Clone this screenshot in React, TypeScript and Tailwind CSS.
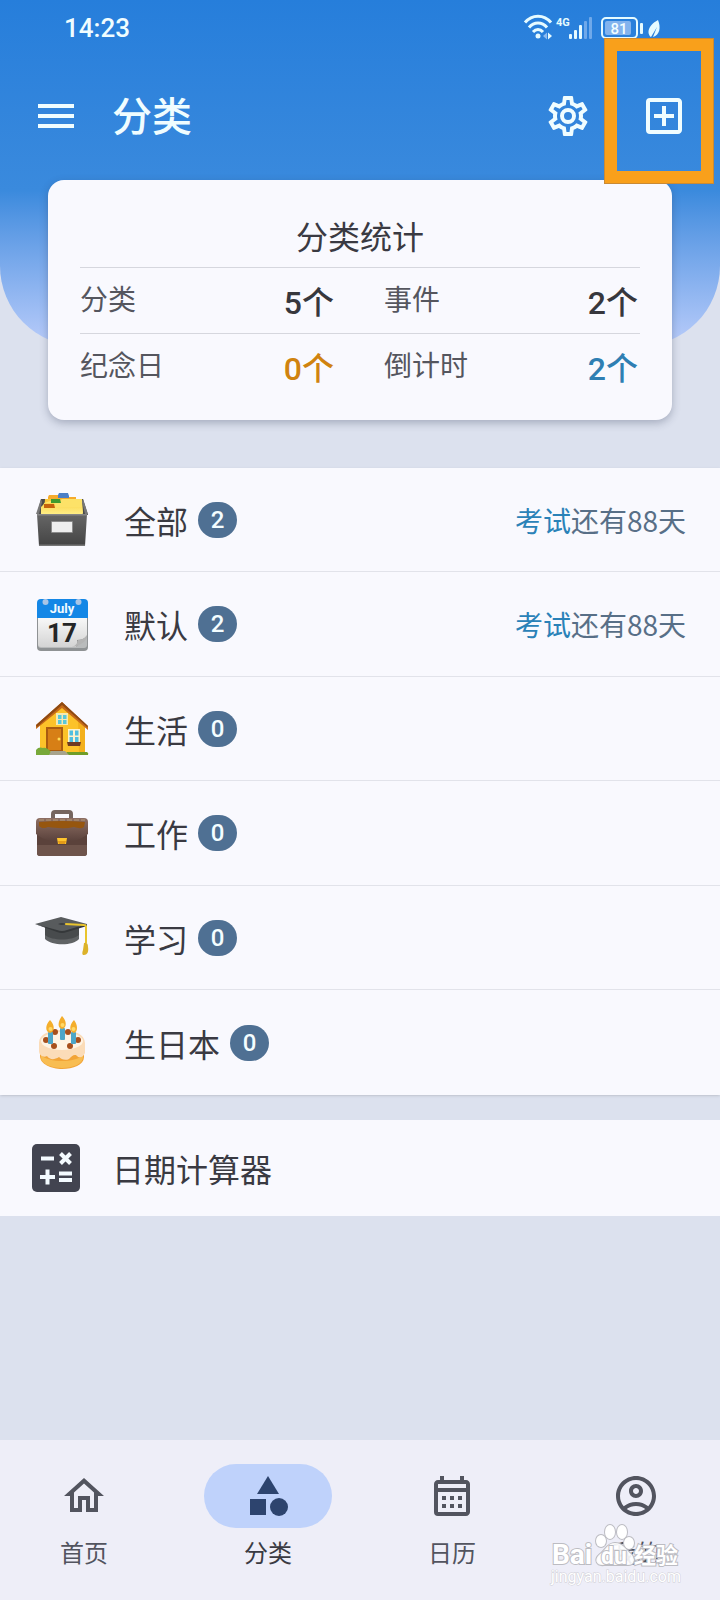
import type { ReactNode } from "react";
import {
  MdMenu,
  MdOutlineAccountCircle,
  MdOutlineAddBox,
  MdOutlineCalendarMonth,
  MdOutlineHome,
  MdCategory,
} from "react-icons/md";

function StatusIcons() {
  return (
    <svg className="h-8 w-36" viewBox="0 2 144 32" fill="none" aria-hidden="true">
      <g stroke="#e6fbff" strokeWidth="3">
        <path d="M5 12.500C12 4 24 4 31 12.500" />
        <path d="M9 17.500C14 11.500 22 11.500 27 17.500" />
        <path d="M13 22C16 18.500 20 18.500 23 22" />
      </g>
      <circle cx="18" cy="26" r="2.500" fill="#e6fbff" />
      <path d="M27 22.500v7l-4-3.500z" fill="#8dbcf0" />
      <path d="M28 22.500v7l4-3.500z" fill="#e6fbff" />
      <text x="36" y="16" fontSize="11" fontWeight="700" fill="#e6fbff" textAnchor="start">4G</text>
      <g fill="#e6fbff">
        <rect x="49" y="24" width="3" height="5" rx="1" />
        <rect x="54" y="20" width="3" height="9" rx="1" />
        <rect x="59" y="15" width="3" height="14" rx="1" />
      </g>
      <g fill="#6fa9ea">
        <rect x="64" y="11" width="3" height="18" rx="1" />
        <rect x="69" y="7" width="3" height="22" rx="1" />
      </g>
      <rect x="82" y="8" width="35" height="20" rx="4" stroke="#e6fbff" strokeWidth="2" />
      <rect x="85" y="11" width="26" height="14" rx="2" fill="#82b3ee" />
      <text x="99" y="24" fontSize="15" fontWeight="500" fill="#f2fdff" textAnchor="middle">81</text>
      <rect x="120" y="13" width="3" height="11" rx="1" fill="#e6fbff" />
      <path d="M138 10c3 7 2 15-5 17l4-10-6 10c-4-3-4-11 7-17z" fill="#e6fbff" />
    </svg>
  );
}

function GearIcon() {
  return (
    <svg className="size-12" viewBox="0 0 24 24" fill="currentColor" aria-hidden="true">
      <path d="M12,8A4,4 0 0,1 16,12A4,4 0 0,1 12,16A4,4 0 0,1 8,12A4,4 0 0,1 12,8M12,10A2,2 0 0,0 10,12A2,2 0 0,0 12,14A2,2 0 0,0 14,12A2,2 0 0,0 12,10M10,22C9.75,22 9.54,21.82 9.5,21.58L9.13,18.93C8.5,18.68 7.96,18.34 7.44,17.94L4.95,18.95C4.73,19.03 4.46,18.95 4.34,18.73L2.34,15.27C2.21,15.05 2.27,14.78 2.46,14.63L4.57,12.97L4.5,12L4.57,11L2.46,9.37C2.27,9.22 2.21,8.95 2.34,8.73L4.34,5.27C4.46,5.05 4.73,4.96 4.95,5.05L7.44,6.05C7.96,5.66 8.5,5.32 9.13,5.07L9.5,2.42C9.54,2.18 9.75,2 10,2H14C14.25,2 14.46,2.18 14.5,2.42L14.87,5.07C15.5,5.32 16.04,5.66 16.56,6.05L19.05,5.05C19.27,4.96 19.54,5.05 19.66,5.27L21.66,8.73C21.79,8.95 21.73,9.22 21.54,9.37L19.43,11L19.5,12L19.43,13L21.54,14.63C21.73,14.78 21.79,15.05 21.66,15.27L19.66,18.73C19.54,18.95 19.27,19.04 19.05,18.95L16.56,17.95C16.04,18.34 15.5,18.68 14.87,18.93L14.5,21.58C14.46,21.82 14.25,22 14,22H10M11.25,4L10.88,6.61C9.68,6.86 8.62,7.5 7.85,8.39L5.44,7.35L4.69,8.65L6.8,10.2C6.4,11.37 6.4,12.64 6.8,13.8L4.68,15.36L5.43,16.66L7.86,15.62C8.63,16.5 9.68,17.14 10.87,17.38L11.24,20H12.76L13.13,17.39C14.32,17.14 15.37,16.5 16.14,15.62L18.57,16.66L19.32,15.36L17.2,13.81C17.6,12.64 17.6,11.37 17.2,10.2L19.31,8.65L18.56,7.35L16.15,8.39C15.38,7.5 14.32,6.86 13.12,6.62L12.75,4H11.25Z" />
    </svg>
  );
}

function FileBoxIcon() {
  return (
    <svg className="size-14" viewBox="0 0 56 56" aria-hidden="true">
      <defs>
        <linearGradient id="box-front" x1="0" y1="0" x2="0" y2="1">
          <stop offset="0" stopColor="#666" />
          <stop offset="1" stopColor="#444" />
        </linearGradient>
        <linearGradient id="box-folder" x1="0" y1="0" x2="0" y2="1">
          <stop offset="0" stopColor="#fbd54c" />
          <stop offset="1" stopColor="#fff08a" />
        </linearGradient>
      </defs>
      <path d="M7 7h42l5 16H3z" fill="#4a4a4a" />
      <path d="M14 5l1-2h12l1 2h14v6H14z" fill="#f5ab2c" />
      <path d="M24 3l1-2h9l1 3v2H24z" fill="#4b7fc6" />
      <path d="M11 7h35v13H10z" fill="#f9c83c" />
      <path d="M10 11l6-2h10l2-2h20l1 14H8z" fill="#fde268" />
      <path d="M7 15l4-4h9l2 4h26l1 8H7z" fill="url(#box-folder)" />
      <path d="M17 7h9l1 4H17z" fill="#3f9c2e" />
      <path d="M10 12h10l1 4H10z" fill="#c4620c" />
      <path d="M3 22h50l-2 32H5z" fill="url(#box-front)" />
      <path d="M2 22l5-15 1 3-3 12zM54 22L49 7l-1 3 3 12z" fill="#777" />
      <path d="M3 22h50v1.500H3z" fill="#858585" />
      <path d="M5 52.500h46V54H5z" fill="#777" />
      <rect x="17" y="29" width="22" height="12" rx="1" fill="#8b8b8b" />
      <rect x="18" y="30" width="20" height="10" fill="#eee" />
    </svg>
  );
}

function JulyIcon() {
  return (
    <svg className="size-14" viewBox="0 0 56 56" aria-hidden="true">
      <defs>
        <linearGradient id="july-page" x1="0" y1="0" x2="0" y2="1">
          <stop offset="0" stopColor="#fdfdfd" />
          <stop offset="1" stopColor="#d4d4d4" />
        </linearGradient>
      </defs>
      <rect x="3" y="6" width="51" height="49" rx="4" fill="#8f9294" />
      <rect x="4" y="6" width="49" height="46" rx="3" fill="#b9bbbc" />
      <path d="M4 18h49v23L42 51H7q-3 0-3-3z" fill="url(#july-page)" />
      <path d="M42 51c1-3 2-5 1-7 4 0 7-1 10-4z" fill="#8a8a8a" />
      <path d="M53 39c-3 4-6 5-9 5 0 3-3 6-6 7 7-1 12-4 15-9z" fill="#b4b4b4" />
      <path d="M3 22V7q0-4 4-4h43q4 0 4 4v15z" fill="#1487e6" />
      <circle cx="11.500" cy="6" r="3" fill="#a9c5e6" />
      <circle cx="44.500" cy="6" r="3" fill="#a9c5e6" />
      <text x="28" y="17" fontSize="13" fontWeight="700" fill="#f2fbff" textAnchor="middle">July</text>
      <text x="28" y="46" fontSize="26" fontWeight="700" fill="#252525" textAnchor="middle">17</text>
    </svg>
  );
}

function HouseIcon() {
  return (
    <svg className="size-14" viewBox="0 0 56 56" aria-hidden="true">
      <path d="M6 23L28 4l23 19v29H6z" fill="#fcc229" />
      <path d="M44 20l7 4v28h-6z" fill="#f3b01c" />
      <path d="M28 1L54 25v4L28 7 2 28v-4z" fill="#c76a17" />
      <path d="M28 1L54 25l-1 1L28 4 3 26l-1-2z" fill="#8f4a12" />
      <rect x="22" y="12" width="12" height="12" fill="#f5e9b1" />
      <path d="M24 14h3.500v4H24zM29 14h3.500v4H29zM24 19h3.500v4H24zM29 19h3.500v4H29z" fill="#59c7d8" />
      <rect x="12" y="26" width="17" height="24" fill="#a95b10" />
      <rect x="14" y="28" width="13" height="21" fill="#d77f16" />
      <circle cx="25" cy="38" r="1.500" fill="#ffdc55" />
      <rect x="34" y="28" width="12" height="14" fill="#fff2cc" />
      <path d="M35.500 29.500H39v5h-3.500zM41 29.500h3.500v5H41zM35.500 36H39v5h-3.500zM41 36h3.500v5H41z" fill="#51bfe0" />
      <path d="M33 41h14l-1 4H34z" fill="#6e3a22" />
      <path d="M2 54v-5c2-3 5-3 7-2 4-1 6 2 8 4l2 3z" fill="#78a93a" />
      <path d="M31 54l2-3h20q2 1 1 3z" fill="#6f9d27" />
      <path d="M17 50h14l4 4H15z" fill="#a7a38c" />
    </svg>
  );
}

function BriefcaseIcon() {
  return (
    <svg className="size-14" viewBox="0 0 56 56" aria-hidden="true">
      <defs>
        <linearGradient id="case-flap" x1="0" y1="0" x2="0" y2="1">
          <stop offset="0" stopColor="#8d6e63" />
          <stop offset="1" stopColor="#58403a" />
        </linearGradient>
      </defs>
      <path d="M19 14V9q0-2 2-2h14q2 0 2 2v5" fill="none" stroke="#75655f" strokeWidth="4" />
      <rect x="3" y="18" width="50" height="33" rx="3" fill="#5b423b" />
      <path d="M3 40h50v8q0 3-3 3H6q-3 0-3-3z" fill="#6e544b" />
      <path d="M2 17q0-4 4-4h44q4 0 4 4v12c-7 6-17 8-26 8S9 35 2 29z" fill="url(#case-flap)" />
      <path d="M5 17q24-2 46 0l-1 5c-3 2-6 1-10 0-9 2-18 1-26 0-4 2-7 1-9-1z" fill="#96560f" />
      <path d="M5 15h46" stroke="#b59a77" strokeWidth="1" strokeDasharray="5 2" />
      <path d="M23 33h10l-1 6h-8z" fill="#ffc52d" />
      <path d="M24 36h8l-1 3h-6z" fill="#e39b18" />
    </svg>
  );
}

function GraduationIcon() {
  return (
    <svg className="size-14" viewBox="0 0 56 56" aria-hidden="true">
      <path d="M11 17h34v11c-6 7-27 7-34 0z" fill="#484b4d" />
      <path d="M11 25c7 6 27 6 34 0v4c-6 7-27 7-34 0z" fill="#606365" />
      <path d="M1 14L27 7l26 7-20 7q-5 2-10 0z" fill="#585b5d" />
      <path d="M1 14l22 6q5 2 10 0l20-6v2l-20 6q-5 2-10 0z" fill="#35383a" />
      <path d="M31 14l19 1q2 0 2 2v16" fill="none" stroke="#e9c42d" strokeWidth="2" />
      <path d="M50 33q4-1 4 4c1 5-1 8-4 8-2 0-2-2-1-5z" fill="#dcb22a" />
      <path d="M24 14q4-2 8 0-4 2-8 0" fill="#3b3e40" />
    </svg>
  );
}

function CakeIcon() {
  return (
    <svg className="size-14" viewBox="0 0 56 56" aria-hidden="true">
      <path d="M6 30h44v12c0 8-11 12-22 12S6 49 6 41z" fill="#f2a437" />
      <path d="M7 40c8 8 34 8 42 0v2c0 7-10 11-21 11S7 49 7 42z" fill="#f8bd52" />
      <path d="M5 28C5 19 15 15 28 15s23 5 23 13v10c-2 4-4 5-7 4-3-4-6-1-9 2-4 2-8 0-10-2-5 3-9 3-12-1-4 2-8-1-8-5z" fill="#fbdcb8" />
      <ellipse cx="28" cy="26" rx="21" ry="9" fill="#fff4e4" />
      <g fill="#a7501d">
        <circle cx="12" cy="25" r="3" />
        <circle cx="44" cy="25" r="3" />
        <circle cx="21" cy="17" r="3" />
        <circle cx="34" cy="17" r="3" />
        <circle cx="20" cy="31" r="3" />
        <circle cx="36" cy="31" r="3" />
      </g>
      <g fill="#4da6c8">
        <rect x="14" y="17" width="5" height="12" rx="1" />
        <rect x="26" y="13" width="5" height="12" rx="1" />
        <rect x="37" y="17" width="5" height="12" rx="1" />
      </g>
      <g fill="#f4ae2c">
        <path d="M16 5c5 5 5 12 0 13-5-1-5-8 0-13zM28 1c5 5 5 12 0 13-5-1-4-8 0-13zM40 5c4 5 4 12 0 13-5-1-5-8 0-13z" />
      </g>
      <g fill="#ffd968">
        <circle cx="16.500" cy="14" r="2" />
        <circle cx="28.500" cy="10" r="2" />
        <circle cx="39.500" cy="14" r="2" />
      </g>
    </svg>
  );
}

function CalculatorIcon() {
  return (
    <svg className="size-12" viewBox="0 0 48 48" fill="none" aria-hidden="true">
      <rect width="48" height="48" rx="5" fill="#424450" />
      <g stroke="#f4fbff" strokeWidth="4">
        <path d="M9 14.500h13M8 33h15M15.500 25.500v15M27 29.500h13M27 36h13" />
        <path d="M28.500 9.500l10 10M38.500 9.500l-10 10" />
      </g>
    </svg>
  );
}

function Watermark() {
  return (
    <svg
      className="pointer-events-none absolute right-9 bottom-3 h-20 w-36"
      viewBox="0 0 144 80"
      stroke="#bcbcc2"
      strokeWidth="2"
      paintOrder="stroke"
      fill="#fff"
      aria-hidden="true"
    >
      <text x="12" y="56" fontSize="28" fontWeight="700">Bai</text>
      <ellipse cx="61" cy="33" rx="5" ry="6" />
      <ellipse cx="70" cy="24" rx="5" ry="7" />
      <ellipse cx="82" cy="24" rx="5" ry="7" />
      <ellipse cx="89" cy="35" rx="5" ry="6" />
      <path d="M75 35c-8 0-10 8-15 11-7 6-3 12 4 11h22c9 1 10-6 5-11-5-4-8-11-16-11z" fillOpacity="0.9" />
      <text x="61" y="56" fontSize="23" fontWeight="700">du</text>
      <text x="94" y="55" fontSize="22" fontWeight="700">经验</text>
      <text x="76" y="74" fontSize="16" strokeWidth="1" stroke="#cfcfd5" textAnchor="middle">jingyan.baidu.com</text>
    </svg>
  );
}

type Stat = { label: string; value: string; color: string };

const stats: Stat[][] = [
  [
    { label: "分类", value: "5个", color: "text-[#37373d]" },
    { label: "事件", value: "2个", color: "text-[#37373d]" },
  ],
  [
    { label: "纪念日", value: "0个", color: "text-[#d0830f]" },
    { label: "倒计时", value: "2个", color: "text-[#2f7fb3]" },
  ],
];

type Category = { name: string; count: number; icon: ReactNode; next?: { name: string; rest: string } };

const categories: Category[] = [
  { name: "全部", count: 2, icon: <FileBoxIcon />, next: { name: "考试", rest: "还有88天" } },
  { name: "默认", count: 2, icon: <JulyIcon />, next: { name: "考试", rest: "还有88天" } },
  { name: "生活", count: 0, icon: <HouseIcon /> },
  { name: "工作", count: 0, icon: <BriefcaseIcon /> },
  { name: "学习", count: 0, icon: <GraduationIcon /> },
  { name: "生日本", count: 0, icon: <CakeIcon /> },
];

const tabs = [
  { label: "首页", icon: <MdOutlineHome className="size-12" />, active: false },
  { label: "分类", icon: <MdCategory className="size-12" />, active: true },
  { label: "日历", icon: <MdOutlineCalendarMonth className="size-12" />, active: false },
  { label: "我的", icon: <MdOutlineAccountCircle className="size-12" />, active: false },
];

export default function App() {
  return (
    <div className="flex min-h-screen flex-col bg-[#dce1ee] font-[Roboto,'Noto_Sans_CJK_SC',sans-serif] text-[#3a3a42]">
      <header className="relative rounded-b-[80px] bg-linear-to-b from-[#267edb] via-[#3a8add] via-55% to-[#b9ccfa] pb-[170px] text-[#f0fdff]">
        <div className="flex h-14 items-center justify-between pr-14 pl-16">
          <time className="text-[26px] font-medium">14:23</time>
          <StatusIcons />
        </div>
        <div className="flex h-30 items-center px-2">
          <button type="button" aria-label="菜单" className="flex h-24 w-24 items-center justify-center">
            <MdMenu className="size-12" />
          </button>
          <h1 className="flex-1 pt-1 pl-2 text-[40px] font-medium">分类</h1>
          <button type="button" aria-label="设置" className="flex h-24 w-24 items-center justify-center">
            <GearIcon />
          </button>
          <button type="button" aria-label="添加" className="flex h-24 w-24 items-center justify-center">
            <MdOutlineAddBox className="size-12" />
          </button>
        </div>
        <div className="pointer-events-none absolute top-[38px] right-[6px] z-10 h-[146px] w-[110px] border-13 border-[#f9a01b] outline-1 -outline-offset-1 outline-[#c98a35]" />
      </header>

      <main className="flex flex-1 flex-col">
        <section className="relative mx-12 -mt-[166px] rounded-2xl bg-[#f9f9fe] px-8 pb-[21px] shadow-[0_3px_8px_rgba(40,50,80,0.3)]">
          <h2 className="flex h-[87px] items-end justify-center pb-2 font-['Noto_Sans_CJK_SC',sans-serif] text-[32px] leading-12">
            分类统计
          </h2>
          <dl>
            {stats.map((row) => (
              <div key={row[0].label} className="grid h-[66px] grid-cols-2 gap-12 border-t border-[#d6d7de]">
                {row.map((s) => (
                  <div key={s.label} className="flex items-center justify-between">
                    <dt className="text-[28px] text-[#55565e]">{s.label}</dt>
                    <dd className={`pt-1 pr-0.5 text-[32px] leading-12 font-medium ${s.color}`}>{s.value}</dd>
                  </div>
                ))}
              </div>
            ))}
          </dl>
        </section>

        <ul className="mt-12 bg-[#f9f9fe] shadow-sm">
          {categories.map((c) => (
            <li
              key={c.name}
              className="flex h-[104px] items-center border-b border-[#e2e3ea] pr-[34px] pl-[34px] last:border-0 even:h-[105px]"
            >
              {c.icon}
              <span className="pl-[34px] font-['Noto_Sans_CJK_SC',sans-serif] text-[32px]">{c.name}</span>
              <span className="ml-[10px] flex h-9 w-[39px] items-center justify-center rounded-full bg-[#4f7093] text-[24px] font-medium text-[#f4fdff]">
                {c.count}
              </span>
              {c.next && (
                <span className="ml-auto font-['Noto_Sans_CJK_SC',sans-serif] text-[28px] text-[#586f87]">
                  <span className="text-[#2a82b8]">{c.next.name}</span>
                  {c.next.rest}
                </span>
              )}
            </li>
          ))}
        </ul>

        <button
          type="button"
          className="mt-[25px] flex h-24 items-center gap-8 bg-[#f9f9fe] px-8 text-left font-['Noto_Sans_CJK_SC',sans-serif] text-[32px]"
        >
          <CalculatorIcon />
          日期计算器
        </button>
      </main>

      <nav className="relative grid h-40 grid-cols-4 gap-4 bg-[#eeeef8] pt-6">
        {tabs.map((t) => (
          <a
            key={t.label}
            href="#"
            className={`flex flex-col items-center gap-2 text-[24px] leading-8 ${t.active ? "text-[#3a3a42]" : "text-[#52545f]"}`}
          >
            <span
              className={`flex h-16 w-32 items-center justify-center rounded-full ${t.active ? "bg-[#bfd2fb] text-[#2d446e]" : ""}`}
            >
              {t.icon}
            </span>
            <span className="font-['Noto_Sans_CJK_SC',sans-serif]">{t.label}</span>
          </a>
        ))}
        <Watermark />
      </nav>
    </div>
  );
}
